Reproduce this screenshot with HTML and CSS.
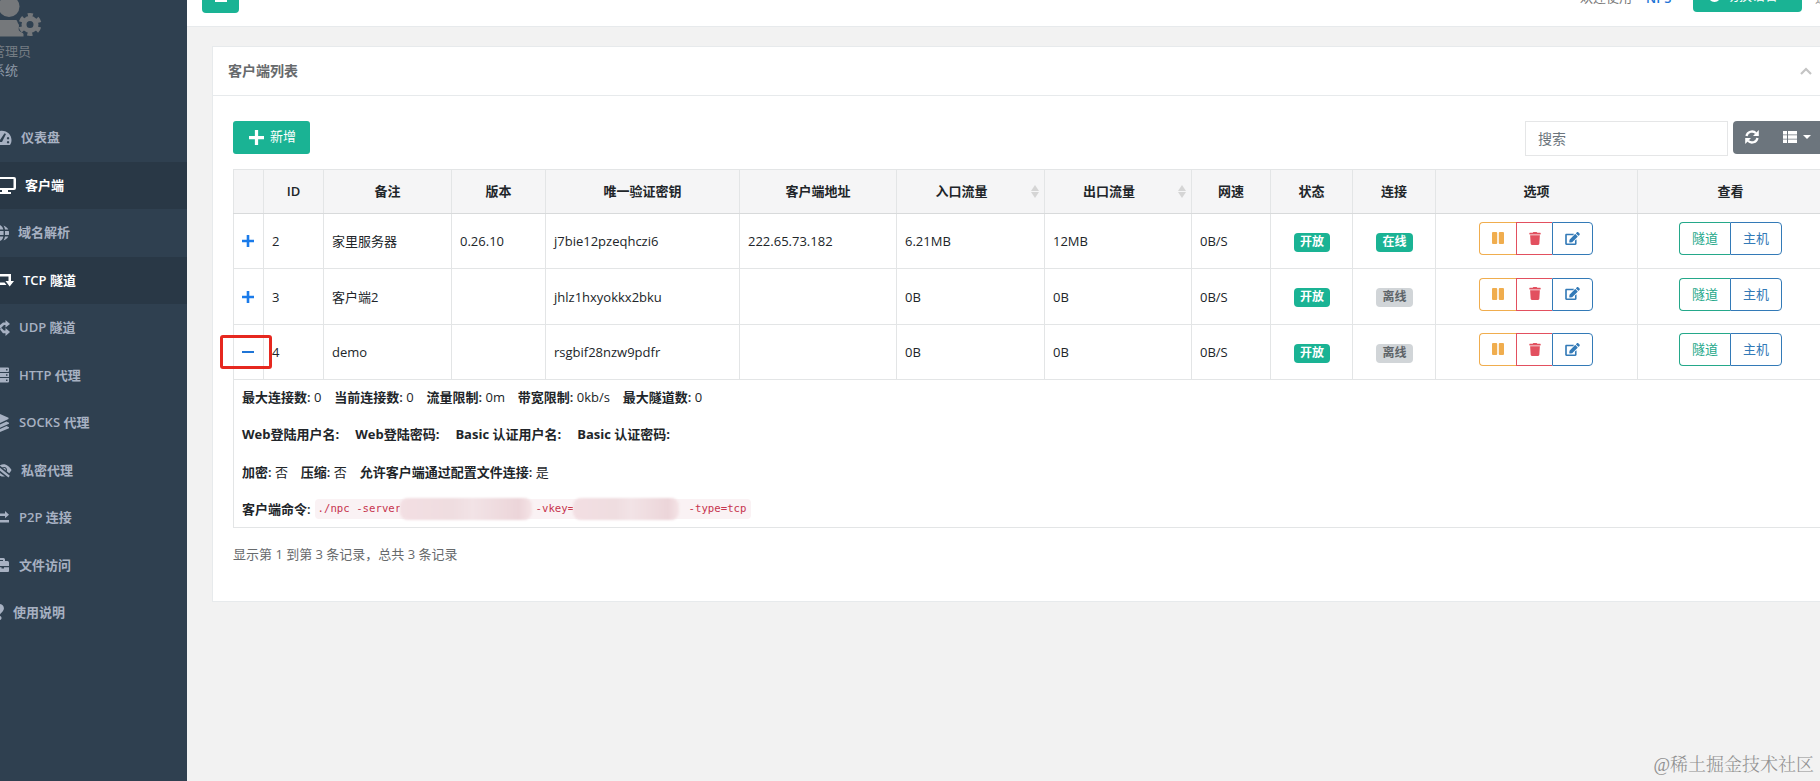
FILE: index.html
```html
<!DOCTYPE html>
<html lang="zh-CN">
<head>
<meta charset="utf-8">
<title>客户端列表</title>
<link rel="stylesheet" href="styles.css">
</head>
<body>
<svg class="defs" width="0" height="0">
  <symbol id="pause" viewBox="0 0 12 12"><rect x="0" y="0" width="5.2" height="12" rx="1"/><rect x="6.8" y="0" width="5.2" height="12" rx="1"/></symbol>
  <symbol id="trash" viewBox="0 0 448 512"><path d="M432 32H312l-9-19a24 24 0 0 0-22-13H167a24 24 0 0 0-22 13l-9 19H16A16 16 0 0 0 0 48v32a16 16 0 0 0 16 16h416a16 16 0 0 0 16-16V48a16 16 0 0 0-16-16zM32 128l21 339a48 48 0 0 0 48 45h246a48 48 0 0 0 48-45l21-339z"/></symbol>
  <symbol id="edit" viewBox="0 0 576 512"><path d="M402.600 83.200l90.200 90.200c3.800 3.800 3.800 10 0 13.800L274.400 405.600l-92.800 10.300c-12.400 1.400-22.900-9.100-21.500-21.500l10.300-92.800L388.800 83.200c3.800-3.800 10-3.800 13.800 0zm162-22.900l-48.800-48.800c-15.200-15.200-39.900-15.200-55.200 0l-35.400 35.400c-3.800 3.800-3.800 10 0 13.800l90.200 90.200c3.800 3.800 10 3.800 13.800 0l35.400-35.400c15.200-15.300 15.200-40 0-55.200zM384 346.200V448H64V128h229.800c3.200 0 6.200-1.300 8.500-3.500l40-40c7.600-7.600 2.200-20.500-8.500-20.500H48C21.500 64 0 85.500 0 112v352c0 26.500 21.500 48 48 48h352c26.500 0 48-21.500 48-48V306.200c0-10.700-12.900-16-20.500-8.500l-40 40c-2.200 2.300-3.500 5.300-3.500 8.500z"/></symbol>
  <symbol id="plus" viewBox="0 0 12 12"><path d="M4.700 0h2.600v4.700H12v2.600H7.300V12H4.700V7.300H0V4.700h4.700z"/></symbol>
</svg>
<div class="app">
  <nav class="sidebar">
    <div class="profile">
      <svg class="avatar" width="44" height="37" viewBox="0 0 44 37">
        <circle cx="9" cy="6.500" r="10.500"/>
        <path d="M0 20h15.500c2 0 1.500 2 3 4s-1 5 1 7 3 1 4 3v2.500H0z"/>
        <g class="gear"><circle cx="30" cy="24.500" r="6" fill="none" stroke-width="5"/><circle cx="30" cy="24.500" r="9.500" fill="none" stroke-width="4" stroke-dasharray="5 4.950" stroke-dashoffset="-2.500"/></g>
      </svg>
      <div class="who">管理员</div>
      <div class="role">系统</div>
    </div>
    <ul class="menu">
      <li><svg width="12" height="16" viewBox="0 0 12 16"><path fill-rule="evenodd" d="M0 1c7-1 11.500 4 11.500 9 0 2-.5 3.500-1.500 5H0v-3h2L6 4 4.500 3.200 0 10zM8 7a1.200 1.200 0 1 0 .1 0zM8 11a1.200 1.200 0 1 0 .1 0z"/></svg><span class="g9">仪表盘</span></li>
      <li class="on"><svg width="16" height="18" viewBox="0 0 16 18"><path fill-rule="evenodd" d="M0 1h14a2 2 0 0 1 2 2v9a2 2 0 0 1-2 2H8v2h3v2H0v-2h2v-2H0v-2h13.500V3H0z"/></svg><span class="g9">客户端</span></li>
      <li><svg width="9" height="16" viewBox="0 0 9 16"><path d="M0 0c2 1 3 3 3.300 4.500H0zM3.500 0.500c2 .8 4 2.300 4.800 4H5C4.700 3 4.200 1.500 3.500.5zM0 6h3.600v4H0zM5 6h3.800c.3 1.500.3 2.600 0 4H5zM0 11.500h3.300C3 13.500 2 15 0 16zM5 11.500h3.300c-.8 1.700-2.600 3.200-4.800 4 .7-1 1.200-2.500 1.500-4z"/></svg><span class="g9">域名解析</span></li>
      <li class="on"><svg width="14" height="14" viewBox="0 0 14 14"><path d="M0 1h11v7h3l-4.300 5.500L5.500 8H8.500V3.500H0zM0 9.500h4.500L6.500 12H0z"/></svg><span class="g9">TCP 隧道</span></li>
      <li><svg width="10" height="16" viewBox="0 0 10 16"><path d="M0 5l3-2.500h2.500V0L10 4 5.500 7.500V5H4L0 9zM0 9.500l1.500-1.500L4 10.500h1.500V8L10 12l-4.500 4v-2.700H3z"/></svg><span class="g9">UDP 隧道</span></li>
      <li><svg width="9" height="16" viewBox="0 0 9 16"><path fill-rule="evenodd" d="M0 .5h8a1 1 0 0 1 1 1V4a1 1 0 0 1-1 1H0zM6 2v1.500h1.500V2zM0 6h9v4H0zm6 1.300v1.500h1.500V7.300zM0 11h9v3.500a1 1 0 0 1-1 1H0zm6 1.500V14h1.500v-1.500z"/></svg><span class="g9 g10">HTTP 代理</span></li>
      <li><svg width="9" height="18" viewBox="0 0 9 18"><path d="M0 0l8.500 3.700v1.300L0 9zM0 10.500L6.500 7.500 9 8.700V9.800L0 13.700zM0 15l6.500-3L9 13.300v1L0 18z"/></svg><span class="g9 g10">SOCKS 代理</span></li>
      <li><svg width="12" height="16" viewBox="0 0 12 16"><path fill-rule="evenodd" d="M0 3.200C4.500.5 9 3.500 11.500 8c-.6 1.300-1.400 2.300-2.300 3.200L6.700 9.200C8 6.500 5 3.800 2.300 5.400L0 3.800zM0 5.800l9.800 8L8.500 15.500 0 8.800zM0 11l5 3.500c-1.800.3-3.500 0-5-.8z"/><path d="M3 6c1.500-.8 3.200.6 2.700 2.400z"/></svg><span class="g9">私密代理</span></li>
      <li><svg width="9" height="14" viewBox="0 0 9 14"><path d="M0 2.500h5V0L9 3.700 5 7.300V5H0zM0 9h9v2.400H0z"/></svg><span class="g9 g10">P2P 连接</span></li>
      <li><svg width="9" height="16" viewBox="0 0 9 16"><path fill-rule="evenodd" d="M0 1h3.500A1.500 1.500 0 0 1 5 2.500V4h2.500A1.500 1.500 0 0 1 9 5.500V9H0V4h3V3H0zM0 10.300h1.500v1.200H4v-1.200h5v3.700a1 1 0 0 1-1 1H0z"/></svg><span class="g9 g10">文件访问</span></li>
      <li><svg width="4" height="17" viewBox="0 0 4 17"><path d="M0 0c3 .5 4.500 3 3.700 5.500C3 8 1 8.500 0 10.500zM0 12c2 .3 2 3.500 0 4z"/></svg><span class="g9">使用说明</span></li>
    </ul>
  </nav>
  <main class="main">
    <header class="topbar">
      <button class="toggle"><i></i></button>
      <span class="welcome">欢迎使用</span><b class="brand">NPS</b>
      <button class="lang"><svg width="13" height="13" viewBox="0 0 13 13"><circle cx="6.500" cy="6.500" r="6.500"/></svg>切换语言</button>
      <span class="logout">退</span>
    </header>
    <section class="panel">
      <div class="panel-head"><h5>客户端列表</h5><svg width="12" height="8" viewBox="0 0 12 8"><path d="M1 7l5-5 5 5" fill="none" stroke="#c4c4c4" stroke-width="2.200"/></svg></div>
      <div class="panel-body">
        <div class="toolbar">
          <button class="add"><svg width="15" height="15"><use href="#plus"/></svg><span>新增</span></button>
          <div class="tools">
            <input type="text" placeholder="搜索">
            <div class="grey">
              <svg width="14" height="14" viewBox="0 0 14 14"><path d="M1.500 6A5.600 5.600 0 0 1 11 3.200M12.500 8A5.600 5.600 0 0 1 3 10.800" fill="none" stroke="#fff" stroke-width="2.300"/><path d="M13.800 0v6H8zM.2 14V8H6z"/></svg>
              <svg class="list" width="14" height="12" viewBox="0 0 14 12"><path d="M0 0h4v3.400H0zM5 0h9v3.400H5zM0 4.300h4v3.400H0zM5 4.300h9v3.400H5zM0 8.600h4V12H0zM5 8.600h9V12H5z"/></svg>
              <i class="caret"></i>
            </div>
          </div>
        </div>
        <table>
          <colgroup><col class="c0"><col class="c1"><col class="c2"><col class="c3"><col class="c4"><col class="c5"><col class="c6"><col class="c7"><col class="c8"><col class="c9"><col class="c10"><col class="c11"><col class="c12"></colgroup>
          <thead><tr><th></th><th>ID</th><th>备注</th><th>版本</th><th>唯一验证密钥</th><th>客户端地址</th><th class="sort">入口流量</th><th class="sort">出口流量</th><th>网速</th><th>状态</th><th>连接</th><th>选项</th><th>查看</th></tr></thead>
          <tbody>
            <tr><td class="exp"><svg width="12" height="12"><use href="#plus"/></svg></td><td>2</td><td>家里服务器</td><td>0.26.10</td><td>j7bie12pzeqhczi6</td><td>222.65.73.182</td><td>6.21MB</td><td>12MB</td><td>0B/S</td><td class="mid"><span class="badge">开放</span></td><td class="mid"><span class="badge">在线</span></td>
              <td class="mid"><div class="group"><a class="or"><svg width="12" height="12"><use href="#pause"/></svg></a><a class="rd"><svg width="12" height="13"><use href="#trash"/></svg></a><a class="bl"><svg width="15" height="13"><use href="#edit"/></svg></a></div></td><td class="mid"><div class="group"><a class="gr">隧道</a><a class="bl tx">主机</a></div></td></tr>
            <tr class="tall"><td class="exp"><svg width="12" height="12"><use href="#plus"/></svg></td><td>3</td><td>客户端2</td><td></td><td>jhlz1hxyokkx2bku</td><td></td><td>0B</td><td>0B</td><td>0B/S</td><td class="mid"><span class="badge">开放</span></td><td class="mid"><span class="badge off">离线</span></td>
              <td class="mid"><div class="group"><a class="or"><svg width="12" height="12"><use href="#pause"/></svg></a><a class="rd"><svg width="12" height="13"><use href="#trash"/></svg></a><a class="bl"><svg width="15" height="13"><use href="#edit"/></svg></a></div></td><td class="mid"><div class="group"><a class="gr">隧道</a><a class="bl tx">主机</a></div></td></tr>
            <tr><td class="exp"><i class="minus"></i><i class="mark"></i></td><td>4</td><td>demo</td><td></td><td>rsgbif28nzw9pdfr</td><td></td><td>0B</td><td>0B</td><td>0B/S</td><td class="mid"><span class="badge">开放</span></td><td class="mid"><span class="badge off">离线</span></td>
              <td class="mid"><div class="group"><a class="or"><svg width="12" height="12"><use href="#pause"/></svg></a><a class="rd"><svg width="12" height="13"><use href="#trash"/></svg></a><a class="bl"><svg width="15" height="13"><use href="#edit"/></svg></a></div></td><td class="mid"><div class="group"><a class="gr">隧道</a><a class="bl tx">主机</a></div></td></tr>
            <tr class="detail"><td colspan="13">
              <p><span><b>最大连接数:</b> 0</span><span><b>当前连接数:</b> 0</span><span><b>流量限制:</b> 0m</span><span><b>带宽限制:</b> 0kb/s</span><span><b>最大隧道数:</b> 0</span></p>
              <p class="wide"><span><b>Web登陆用户名:</b></span><span><b>Web登陆密码:</b></span><span><b>Basic 认证用户名:</b></span><span><b>Basic 认证密码:</b></span></p>
              <p><span><b>加密:</b> 否</span><span><b>压缩:</b> 否</span><span><b>允许客户端通过配置文件连接:</b> 是</span></p>
              <p><b>客户端命令:</b><code><span class="srv">./npc -server</span><i class="blur b1"></i><span class="vk">-vkey=</span><i class="blur b2"></i><span>-type=tcp</span></code></p>
            </td></tr>
          </tbody>
        </table>
        <div class="info">显示第 1 到第 3 条记录，总共 3 条记录</div>
      </div>
    </section>
  </main>
</div>
<div class="watermark">@稀土掘金技术社区</div>
</body>
</html>
```
FILE: styles.css
```css
* { box-sizing: border-box; }
html, body { margin: 0; height: 781px; overflow: hidden; }
body { position: relative; width: 1820px; background: #f2f2f2; color: #212529; font: 13px/20px "Open Sans", "Noto Sans CJK SC", sans-serif; }
svg { display: block; fill: currentColor; flex: none; }
.defs { position: absolute; }
button { border: 0; font: inherit; padding: 0; }
b { font-weight: 600; }
.app { display: flex; width: 1820px; height: 781px; overflow: hidden; }

.sidebar { flex: none; width: 187px; background: #2f4050; color: #a7b1c2; overflow: hidden; }
.profile { height: 114px; }
.avatar { color: #75787b; }
.gear { stroke: #75787b; }
.who, .role { line-height: 19px; }
.who { margin: 5px 0 0 -8px; color: #747c83; }
.role { margin-left: -8px; color: #8f9aa8; }
.menu { list-style: none; margin: 0; padding: 0; }
.menu li { display: flex; align-items: center; height: 47.5px; font-weight: 600; }
.menu li.on { background: #293846; color: #fff; }
.g9 { margin: -1px 0 0 9px; }
.g10 { margin-left: 10px; }

.main { flex: none; width: 1660px; }
.topbar { display: flex; align-items: flex-start; height: 27px; background: #fff; border-bottom: 1px solid #e7eaec; overflow: hidden; }
.toggle { display: flex; justify-content: center; width: 37px; height: 13px; margin-left: 15px; background: #1ab394; border-radius: 0 0 4px 4px; }
.toggle i { width: 12px; height: 2px; background: #fff; }
.welcome { width: 66px; margin: -13px 0 0 1341px; color: #777; }
.brand { width: 47px; margin-top: -12px; color: #1f75d6; }
.lang { display: flex; align-items: center; gap: 5px; width: 109px; height: 33px; margin-top: -21px; padding: 0 0 2px 15px; background: #1ab394; color: #fff; border-radius: 4px; }
.lang svg { margin-top: 2px; }
.logout { margin: -13px 0 0 13px; color: #999; }

.panel { width: 1626px; height: 556px; margin: 19px 0 0 25px; background: #fff; border: 1px solid #e7eaec; }
.panel-head { display: flex; align-items: center; height: 49px; padding: 0 0 1px 15px; border-bottom: 1px solid #e7eaec; color: #676a6c; }
.panel-head h5 { margin: 0; width: 1572px; font-size: 14px; font-weight: 600; }
.panel-body { padding: 25px 0 0 20px; }
.toolbar { display: flex; justify-content: space-between; width: 1590px; height: 48px; }
.add { display: flex; align-items: center; gap: 6px; width: 77px; height: 33px; padding: 0 0 1px 16px; background: #1ab394; color: #fff; border-radius: 3px; }
.add span { margin-top: -2px; }
.tools { display: flex; gap: 5px; }
input { width: 203px; height: 35px; padding: 0 12px; border: 1px solid #e5e6e7; background: #fff; font: 14px "Open Sans", "Noto Sans CJK SC", sans-serif; }
input::placeholder { color: #6c757d; opacity: 1; }
.grey { display: flex; align-items: center; width: 90px; height: 33px; padding: 0 0 1px 12px; background: #6c757d; color: #fff; border-radius: 4px; }
.list { margin-left: 24px; }
.caret { margin-left: 6px; border: 4px solid transparent; border-top-color: #fff; border-bottom: 0; }

table { width: 1590px; table-layout: fixed; border-collapse: collapse; }
.c0 { width: 30px; } .c1 { width: 60px; } .c2 { width: 128px; } .c3 { width: 94px; } .c4 { width: 194px; } .c5 { width: 157px; } .c6 { width: 148px; } .c7 { width: 147px; } .c8 { width: 79px; } .c9 { width: 82px; } .c10 { width: 83px; } .c11 { width: 202px; } .c12 { width: 186px; }
th, td { border: 1px solid #e3e5e6; padding: 0 8px; text-align: left; }
th { height: 44px; padding-bottom: 2px; background: #f5f5f6; border-bottom-color: #d8dadb; text-align: center; font-weight: 600; }
td { height: 55px; }
.tall td { height: 56px; }
.mid { text-align: center; }
.sort { position: relative; padding-right: 26px; }
.sort::before, .sort::after { content: ""; position: absolute; right: 5px; border: 4px solid transparent; }
.sort::before { top: 11px; border-bottom: 6px solid #d5d5d5; }
.sort::after { top: 22px; border-top: 6px solid #d5d5d5; }
.exp { position: relative; color: #1a7bea; }
.exp svg { width: 12px; }
.minus { display: block; width: 12px; height: 2px; background: #1f75d6; }
.mark { position: absolute; left: -14px; top: 10px; width: 52px; height: 34px; border: 3px solid #e6281f; border-radius: 3px; }
.badge { display: inline-block; height: 19px; margin-left: 1px; padding: 0 6px; background: #1ab394; color: #fff; border-radius: 4px; font-size: 12px; line-height: 17px; font-weight: 600; vertical-align: middle; }
.badge.off { background: #d1d5d8; color: #5e6468; }
.group { display: inline-flex; vertical-align: middle; margin-top: -5px; }
.group a { display: flex; align-items: center; justify-content: center; width: 36px; height: 33px; padding-bottom: 1px; border: 1px solid; }
.group a:first-child { border-radius: 4px 0 0 4px; border-right: 0; width: 37px; }
.group a:last-child { border-radius: 0 4px 4px 0; width: 41px; margin-right: 1px; }
.or { color: #f0ad4e; } .rd { color: #e2505f; border-right: 0 !important; } .bl { color: #337ab7; } .gr { color: #24a88a; }
.group a.gr { width: 51px; } .group a.tx { width: 52px; margin-right: 0; }
.detail td { height: 148px; padding: 0 8px; vertical-align: top; }
p { display: flex; gap: 12.900px; height: 37.300px; margin: 0; padding-top: 7px; white-space: nowrap; }
p.wide { gap: 16px; }
p.wide b { font-weight: 700; }
p:last-child { gap: 4px; height: 35px; }
code { display: flex; align-items: center; width: 436px; height: 20px; padding-left: 3px; background: #faf2f4; color: #c7354f; border-radius: 4px; font: 10.700px "DejaVu Sans Mono", monospace; }
.srv { width: 82px; overflow: hidden; }
.blur { height: 22px; border-radius: 8px; background: linear-gradient(90deg, #f3dfe3, #efdde0 40%, #f2e3e6 55%, #ecd5d9 90%, #f5e4e7); filter: blur(1px); }
.b1 { width: 132px; margin-right: 4px; } .b2 { width: 106px; margin-right: 10px; }
.vk { width: 37px; overflow: hidden; }
.info { margin-top: 16px; color: #676a6c; }
.watermark { position: absolute; right: 6px; bottom: 4px; color: #909090; font: 18px/24px "Liberation Serif", "Noto Serif CJK SC", "Noto Sans CJK SC", serif; font-weight: 300; }
```
